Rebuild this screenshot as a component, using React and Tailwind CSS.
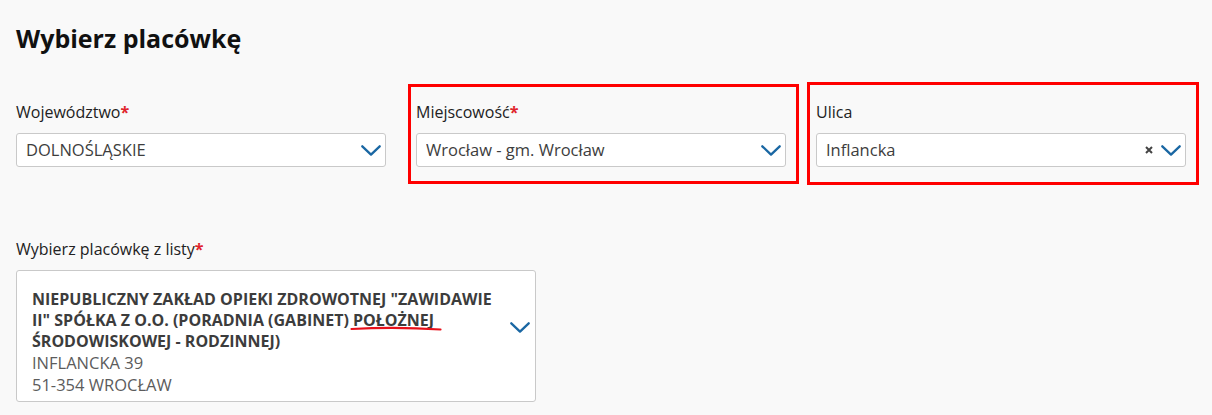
import React from "react";

function Chevron({ className = "" }) {
  return (
    <svg width="20" height="11" viewBox="0 0 20 11" className={className}>
      <polyline points="1.3,1.3 10,9.6 18.7,1.3" fill="none" stroke="#1a67a3" strokeWidth="2.3" strokeLinecap="round" strokeLinejoin="round" />
    </svg>
  );
}

function Label({ text, required }) {
  return (
    <div className="text-[16px] leading-5 text-[#222] mb-[11px]">
      {text}
      {required && <span className="text-[#e0242c] font-bold">*</span>}
    </div>
  );
}

function Select({ value, clearable }) {
  return (
    <div className="h-[34px] bg-white border border-[#c9c9c9] rounded-[3px] flex items-center pl-[9px] pr-[4px]">
      <span className="flex-1 text-[16.5px] text-[#3d3d3d] truncate">{value}</span>
      {clearable && (
        <svg width="8" height="8" viewBox="0 0 8 8" className="mr-[8px]">
          <path d="M1 1 L7 7 M7 1 L1 7" stroke="#444" strokeWidth="2" />
        </svg>
      )}
      <Chevron />
    </div>
  );
}

export default function App() {
  return (
    <div
      className="min-h-[415px] bg-[#f9f9f9] px-4 pt-[22px]"
      style={{ fontFamily: '"Open Sans", "Noto Sans", sans-serif' }}
    >
      <h1 className="text-[25px] leading-8 font-bold text-[#111] mb-[48px]">Wybierz placówkę</h1>

      <div className="relative grid grid-cols-[370px_370px_370px] gap-x-[30px]">
        <div>
          <Label text="Województwo" required />
          <Select value="DOLNOŚLĄSKIE" />
        </div>
        <div>
          <Label text="Miejscowość" required />
          <Select value="Wrocław - gm. Wrocław" />
        </div>
        <div>
          <Label text="Ulica" />
          <Select value="Inflancka" clearable />
        </div>

        {/* annotation frames */}
        <div className="absolute left-[392px] top-[-18px] w-[391px] h-[100px] border-[3px] border-[#ff0000] pointer-events-none" />
        <div className="absolute left-[791px] top-[-20px] w-[392px] h-[103px] border-[3px] border-[#ff0000] pointer-events-none" />
      </div>

      <div className="mt-[72px]">
        <Label text="Wybierz placówkę z listy" required />
        <div className="relative w-[520px] h-[132px] bg-white border border-[#c9c9c9] rounded-[3px] pl-[15px] pt-[18px] flex items-start">
          <div className="w-[468px]">
            <div className="text-[16px] leading-[21px] font-bold text-[#3c3c3c]">
              NIEPUBLICZNY ZAKŁAD OPIEKI ZDROWOTNEJ "ZAWIDAWIE II" SPÓŁKA Z O.O. (PORADNIA (GABINET) POŁOŻNEJ ŚRODOWISKOWEJ - RODZINNEJ)
            </div>
            <div className="text-[16.5px] leading-[22px] text-[#5c5c5c]">INFLANCKA 39</div>
            <div className="text-[16.5px] leading-[22px] text-[#5c5c5c]">51-354 WROCŁAW</div>
          </div>
          <Chevron className="ml-auto mr-[5px] mt-[33px]" />

          <svg className="absolute left-[333px] top-[53px]" width="92" height="8" viewBox="0 0 92 8">
            <path d="M1.5 5 Q 46 2.5 90.5 5.5" fill="none" stroke="#e8101a" strokeWidth="2.2" strokeLinecap="round" />
          </svg>
        </div>
      </div>
    </div>
  );
}
